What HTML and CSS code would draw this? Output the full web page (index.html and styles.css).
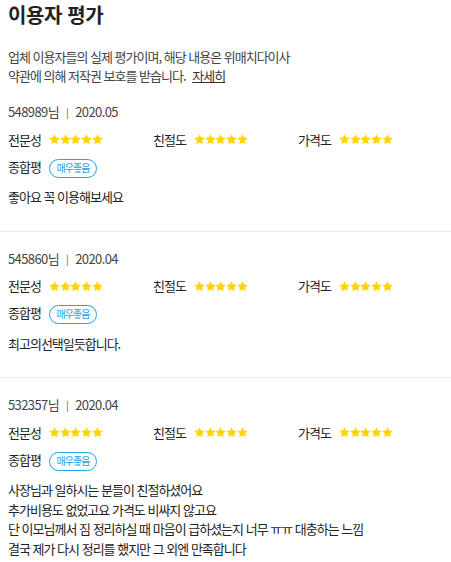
FILE: index.html
```html
<!DOCTYPE html>
<html lang="ko">
<head>
    <meta charset="UTF-8">
    <meta name="viewport" content="width=device-width, initial-scale=1.0">
    <link rel="stylesheet" href="styles.css">
</head>
<body>
    <div class="page">
        <div class="intro">
            <h1 class="title">이용자 평가</h1>
            <p class="notice">
                업체 이용자들의 실제 평가이며, 해당 내용은 위매치다이사<br>
                약관에 의해 저작권 보호를 받습니다. <a href="#" class="more">자세히</a>
            </p>
        </div>

        <div class="review">
            <div class="review-head">548989님<span class="bar">|</span>2020.05</div>
            <div class="scores">
                <div class="score"><span class="label">전문성</span><span class="stars"></span></div>
                <div class="score"><span class="label">친절도</span><span class="stars"></span></div>
                <div class="score"><span class="label">가격도</span><span class="stars"></span></div>
            </div>
            <div class="total"><span class="label">종합평</span><span class="badge">매우좋음</span></div>
            <p class="comment">좋아요 꼭 이용해보세요</p>
        </div>

        <div class="review">
            <div class="review-head">545860님<span class="bar">|</span>2020.04</div>
            <div class="scores">
                <div class="score"><span class="label">전문성</span><span class="stars"></span></div>
                <div class="score"><span class="label">친절도</span><span class="stars"></span></div>
                <div class="score"><span class="label">가격도</span><span class="stars"></span></div>
            </div>
            <div class="total"><span class="label">종합평</span><span class="badge">매우좋음</span></div>
            <p class="comment">최고의선택일듯합니다.</p>
        </div>

        <div class="review">
            <div class="review-head">532357님<span class="bar">|</span>2020.04</div>
            <div class="scores">
                <div class="score"><span class="label">전문성</span><span class="stars"></span></div>
                <div class="score"><span class="label">친절도</span><span class="stars"></span></div>
                <div class="score"><span class="label">가격도</span><span class="stars"></span></div>
            </div>
            <div class="total"><span class="label">종합평</span><span class="badge">매우좋음</span></div>
            <p class="comment">사장님과 일하시는 분들이 친절하셨어요<br>
                추가비용도 없었고요 가격도 비싸지 않고요<br>
                단 이모님께서 짐 정리하실 때 마음이 급하셨는지 너무 ㅠㅠ 대충하는 느낌<br>
                결국 제가 다시 정리를 했지만 그 외엔 만족합니다</p>
        </div>
    </div>

    <script>
        // five full stars for every score
        var star = '<svg viewBox="0 0 24 24" width="11" height="11"><path d="M12 0.5l3.5 7.1 7.9 1-5.7 5.5 1.4 7.9L12 18.3l-7.1 3.7 1.4-7.9L0.6 8.6l7.9-1z" fill="#ffd400"/></svg>';
        document.querySelectorAll('.stars').forEach(function(el) {
            el.innerHTML = star.repeat(5);
        });
    </script>
</body>
</html>
```

FILE: styles.css
```css
body {
    margin: 0;
    font-family: "Noto Sans CJK KR", "Noto Sans", sans-serif;
    color: #333;
    background: #fff;
}

.intro {
    padding: 0 8px;
}

.title {
    margin: 0;
    font-size: 20px;
    line-height: 30px;
    font-weight: 700;
    color: #222;
    letter-spacing: -0.4px;
}

.notice {
    margin: 17px 0 0;
    font-size: 13px;
    line-height: 19px;
    letter-spacing: -1px;
    color: #444;
}

.more {
    color: #333;
    text-decoration: underline;
    margin-left: 4px;
}

.review {
    padding: 17px 8px 24px;
    border-bottom: 1px solid #e8e8ee;
    font-size: 13px;
    letter-spacing: -1px;
}

.review:last-child {
    border-bottom: none;
}

.review-head {
    line-height: 20px;
    color: #444;
    letter-spacing: -0.6px;
}

.bar {
    font-size: 10px;
    color: #555;
    margin: 0 7px;
    position: relative;
    top: -1px;
}

.scores {
    display: grid;
    grid-template-columns: repeat(3, 1fr);
    margin-top: 6px;
}

.score {
    display: flex;
    align-items: center;
    height: 20px;
}

.label {
    color: #222;
    width: 41px;
}

.stars {
    display: flex;
    padding-top: 1px;
}

.stars svg {
    display: block;
    margin-right: -0.3px;
}

.total {
    display: flex;
    align-items: center;
    height: 20px;
    margin-top: 7px;
}

.badge {
    display: inline-block;
    box-sizing: border-box;
    width: 48px;
    height: 19px;
    line-height: 16px;
    text-align: center;
    border: 1.5px solid #1ea5ea;
    border-radius: 10px;
    font-size: 10px;
    letter-spacing: -1px;
    color: #1b9ee3;
    margin-top: 4px;
}

.comment {
    margin: 11px 0 0;
    line-height: 19.5px;
    color: #222;
}
```
